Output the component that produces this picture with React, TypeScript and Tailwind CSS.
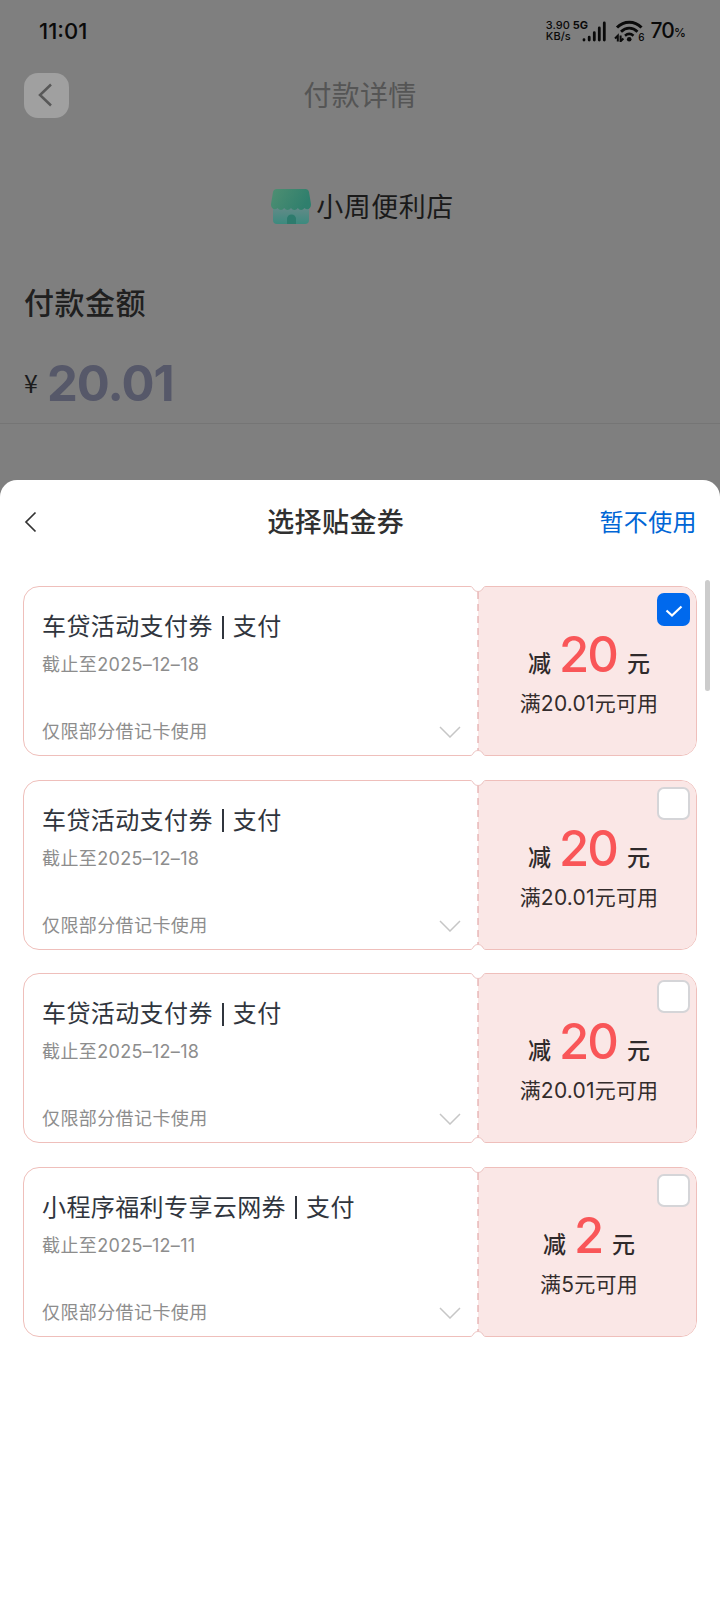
interface Coupon {
  title: string;
  expires: string;
  amount: string;
  condition: string;
  checked?: boolean;
}

const coupons: Coupon[] = [
  { title: '车贷活动支付券', expires: '2025–12–18', amount: '20', condition: '满20.01元可用', checked: true },
  { title: '车贷活动支付券', expires: '2025–12–18', amount: '20', condition: '满20.01元可用' },
  { title: '车贷活动支付券', expires: '2025–12–18', amount: '20', condition: '满20.01元可用' },
  { title: '小程序福利专享云网券', expires: '2025–12–11', amount: '2', condition: '满5元可用' },
];

function SignalIcon() {
  return (
    <svg width="24" height="21" viewBox="0 0 24 21" fill="none" stroke="#0a0a0a" strokeWidth="2.8" strokeLinecap="round">
      <path d="M2 18.700v.4M7.200 16.200v2.900M12.300 11.700v7.400M17.300 7v12.100M22.300 2v17.100" />
    </svg>
  );
}

function WifiIcon() {
  return (
    <svg width="30" height="22" viewBox="0 0 30 22" fill="none" stroke="#0a0a0a">
      <path d="M3 7.5c7-7 17.5-7 24.5 0" strokeWidth="3" />
      <path d="M7 11.800c5-4.800 11.500-4.800 16.500 0" strokeWidth="2.800" />
      <path d="M11 15.700c2.700-2.300 5.800-2.300 8.500 0" strokeWidth="2.600" />
      <circle cx="15.200" cy="19.300" r="2.300" fill="#0a0a0a" stroke="none" />
      <path d="M3.800 21.500v-5.800L1 18.500M6.600 15.500v5.800l2.800-2.800" strokeWidth="2" />
    </svg>
  );
}

function StoreIcon() {
  return (
    <svg width="42" height="36" viewBox="0 0 42 36">
      <defs>
        <linearGradient id="roof" x1="0" y1="0" x2="1" y2="0.3">
          <stop offset="0" stopColor="#4f8f72" />
          <stop offset="1" stopColor="#2f7f6d" />
        </linearGradient>
        <linearGradient id="wall" x1="0" y1="0" x2="0" y2="1">
          <stop offset="0" stopColor="#6b8a8a" />
          <stop offset="1" stopColor="#3c8a7e" />
        </linearGradient>
      </defs>
      <path d="M3 15h36v16a4 4 0 0 1-4 4H7a4 4 0 0 1-4-4z" fill="url(#wall)" />
      <path d="M17 35v-5a4.500 4.500 0 0 1 9 0v5z" fill="#2d7b6d" />
      <path
        d="M7 0h28a4 4 0 0 1 4 3l2 12c.5 4-3.500 7-6.500 4-2 2.500-5 2.500-6.700 0-1.800 2.500-5 2.500-6.800 0-1.800 2.500-5 2.500-6.800 0-1.700 2.500-4.700 2.500-6.700 0C4.500 22 .5 19 1 15L3 3a4 4 0 0 1 4-3z"
        fill="url(#roof)"
      />
    </svg>
  );
}

function Notch({ className }: { className: string }) {
  return (
    <svg className={`absolute -left-2 ${className}`} width="16" height="7" viewBox="0 0 16 7" fill="none">
      <path d="M0 0H16V1C13.500 1 13.300 2 12.600 3 10.500 6.300 5.500 6.300 3.400 3 2.700 2 2.500 1 0 1z" fill="#fff" />
      <path d="M0 .5C2.500 .5 2.700 2 3.400 3 5.500 6.300 10.500 6.300 12.600 3 13.300 2 13.500 .5 16 .5" stroke="#ecc1bf" />
    </svg>
  );
}

function Checkbox({ checked }: { checked?: boolean }) {
  if (!checked) {
    return <div className="absolute right-1.5 top-[6px] h-[33px] w-[33px] rounded-[7px] border-2 border-[#d5d5d8] bg-white" />;
  }
  return (
    <div className="absolute right-1.5 top-[6px] flex h-[33px] w-[33px] items-center justify-center rounded-[7px] bg-[#0069ed]">
      <svg className="mt-0.5" width="18" height="14" viewBox="0 0 18 14" fill="none" stroke="#fff" strokeWidth="2.2">
        <path d="M1.500 6.500 7 11.500 16.500 2.500" />
      </svg>
    </div>
  );
}

function CouponCard({ title, expires, amount, condition, checked }: Coupon) {
  return (
    <div className="relative flex h-[170px] rounded-[16px] border border-[#efbfbb] bg-white">
      <div className="flex w-[454px] flex-col pl-[18px] pr-[17px] pt-[22px]">
        <div className="flex items-center text-[24px] leading-9 tracking-[0.400px] text-[#30353d]">
          <span>{title}</span>
          <span className="ml-[9px] mr-[9px] h-[23px] w-[2px] bg-[#30353d]" />
          <span>支付</span>
        </div>
        <div className="mt-[8px] flex items-center text-[18px] leading-6 text-[#8d8d8d]">
          <span className="tracking-[0.400px]">截止至</span>
          <span className="tracking-[0.300px]">{expires}</span>
        </div>
        <div className="mt-[43px] flex items-center justify-between text-[18px] leading-6 tracking-[0.400px] text-[#8d8d8d]">
          <span>仅限部分借记卡使用</span>
          <svg width="22" height="12" viewBox="0 0 22 12" fill="none" stroke="#c6c6c6" strokeWidth="1.500">
            <path d="M1 1l10 10L21 1" />
          </svg>
        </div>
      </div>
      <div className="relative flex flex-1 flex-col items-center rounded-r-[15px] bg-[#fae7e6] pl-[4px] pt-[42px]">
        <svg className="absolute -left-px top-0" width="2" height="168" viewBox="0 0 2 168">
          <path d="M1 5v158" stroke="#e3a9a9" strokeWidth="1.200" strokeDasharray="7 5" />
        </svg>
        <Notch className="-top-px" />
        <Notch className="-bottom-px rotate-180" />
        <Checkbox checked={checked} />
        <div className="flex h-[52px] items-baseline text-[23px] font-medium leading-[52px] text-[#2f2a2b]">
          <span>减</span>
          <span className="ml-[8px] mr-[10px] text-[49px] font-medium tracking-[-2px] text-[#f95658]">{amount}</span>
          <span>元</span>
        </div>
        <div className="mt-[9px] text-[21px] leading-7 tracking-[0.200px] text-[#332c2c]">{condition}</div>
      </div>
    </div>
  );
}

export default function App() {
  return (
    <div className="h-[1600px] w-[720px] overflow-hidden bg-[#7f7f7f] font-['Inter','Noto_Sans_CJK_SC',sans-serif]">
      <div className="flex h-[480px] flex-col">
        <div className="flex h-[62px] items-center justify-between pl-[39px] pr-[34px] text-[#0a0a0a]">
          <span className="text-[22px] font-medium">11:01</span>
          <div className="flex items-center">
            <div className="flex w-[25px] flex-col text-[11px] font-medium leading-[11px]">
              <span>3.90</span>
              <span>KB/s</span>
            </div>
            <span className="mb-[11px] ml-[2px] text-[11px] font-bold leading-[11px]">5G</span>
            <div className="-ml-[6px]">
              <SignalIcon />
            </div>
            <div className="ml-2">
              <WifiIcon />
            </div>
            <span className="-ml-[6px] mt-3 text-[10px] font-medium leading-[10px]">6</span>
            <span className="ml-[6px] text-[21px] font-medium tracking-[-0.800px]">70</span>
            <span className="mt-1 text-[12px] font-medium">%</span>
          </div>
        </div>

        <div className="grid h-[66px] grid-cols-[45px_1fr_45px] items-center px-6">
          <div className="flex h-[45px] w-[45px] items-center justify-center rounded-[14px] bg-[#a0a0a0]">
            <svg className="-ml-0.5" width="16" height="24" viewBox="0 0 16 24" fill="none" stroke="#585858" strokeWidth="2.500">
              <path d="M13 1.500 2 12l11 10.500" />
            </svg>
          </div>
          <span className="mt-0.5 text-center text-[28px] tracking-[0.200px] text-[#555]">付款详情</span>
        </div>

        <div className="ml-1 mt-[54px] flex h-[50px] items-center justify-center gap-1">
          <StoreIcon />
          <span className="mt-0.5 text-[27px] tracking-[0.500px] text-[#1a1a1a]">小周便利店</span>
        </div>

        <div className="mt-[51px] pl-6 text-[30px] font-medium leading-10 tracking-[0.500px] text-[#202020]">付款金额</div>
        <div className="mt-[31px] flex h-[70px] items-start border-b border-[#757575] pl-6">
          <span className="w-[23px] font-['Noto_Sans_CJK_SC',sans-serif] text-[25px] leading-[57px] text-[#1c1c1c]">¥</span>
          <span className="text-[49px] font-bold leading-[60px] tracking-[-1px] text-[#565869]">20.01</span>
        </div>
      </div>

      <div className="h-[1120px] rounded-t-[17px] bg-white px-[23px]">
        <div className="flex h-[84px] items-center justify-between">
          <svg width="16" height="22" viewBox="0 0 16 22" fill="none" stroke="#333" strokeWidth="1.700">
            <path d="M12.500 1.500 3 11l9.500 9.500" />
          </svg>
          <span className="ml-[33px] mt-0.5 text-[27px] font-medium tracking-[0.400px] text-[#303030]">选择贴金券</span>
          <span className="mt-0.5 text-[24px] tracking-[0.400px] text-[#0066d6]">暂不使用</span>
        </div>
        <div className="relative flex flex-col gap-[23.500px] pt-[22px]">
          {coupons.map((coupon, i) => (
            <CouponCard key={i} {...coupon} />
          ))}
          <div className="absolute -right-[13px] top-[16px] h-[111px] w-[5px] rounded-full bg-[#ccc]" />
        </div>
      </div>
    </div>
  );
}
